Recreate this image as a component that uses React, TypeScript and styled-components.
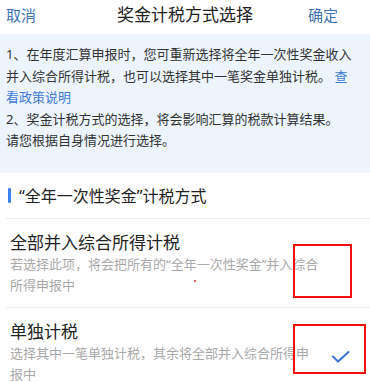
import React from "react";
import styled, { createGlobalStyle } from "styled-components";

const GlobalStyle = createGlobalStyle`
  html, body {
    margin: 0;
    padding: 0;
    background: #ffffff;
  }
  body {
    font-family: "Noto Sans", "Noto Sans CJK SC", sans-serif;
    -webkit-font-smoothing: antialiased;
  }
  * {
    box-sizing: border-box;
  }
`;

const Page = styled.div`
  width: 370px;
  height: 382px;
  overflow: hidden;
  background: #ffffff;
`;

const NavBar = styled.div`
  height: 34px;
  padding: 0 6px 4px 6px;
  display: flex;
  align-items: center;
  justify-content: space-between;
`;

const NavButton = styled.span`
  width: 60px;
  font-size: 15px;
  line-height: 22px;
  color: #3f72b2;
  text-align: ${props => (props.$align ? props.$align : "left")};
  padding-right: ${props => (props.$align === "right" ? "26px" : "0")};
`;

const NavTitle = styled.h1`
  margin: 0;
  font-size: 17px;
  line-height: 22px;
  font-weight: 400;
  color: #222222;
`;

const Notice = styled.div`
  height: 139px;
  background: #edf4fd;
  border-bottom: 2px solid #f3f4f6;
  padding: 10px 16px 0 6px;
  font-size: 13px;
  line-height: 21.5px;
  color: #333333;
`;

const NoticeLine = styled.p`
  margin: 0;
`;

const NoticeLink = styled.span`
  color: #3d7bd6;
`;

const SectionHeader = styled.div`
  height: 46px;
  margin-left: 6px;
  padding-left: 2px;
  display: flex;
  align-items: center;
  border-bottom: 1px solid #ececec;
`;

const SectionMark = styled.span`
  width: 3px;
  height: 15px;
  border-radius: 1px;
  background: #3f80f0;
  margin-right: 8px;
`;

const SectionTitle = styled.span`
  font-size: 16px;
  line-height: 22px;
  color: #222222;
`;

const Option = styled.div`
  position: relative;
  margin-left: 6px;
  padding: 13px 0 11px 4px;
  display: flex;
  align-items: flex-start;
  border-bottom: 1px solid #ececec;
`;

const OptionText = styled.div`
  width: ${props => props.$width}px;
`;

const OptionTitle = styled.div`
  font-size: 17px;
  line-height: 22px;
  color: #222222;
`;

const OptionDesc = styled.div`
  font-size: 13px;
  line-height: 21px;
  color: #a8a8a8;
`;

const CheckSlot = styled.div`
  padding: 26px 0 0 12px;
`;

const Mark = styled.div`
  position: absolute;
  left: ${props => props.$left}px;
  top: ${props => props.$top}px;
  width: ${props => props.$width}px;
  height: ${props => props.$height}px;
  border: 2px solid #f01010;
`;

const Dot = styled.span`
  position: absolute;
  left: 188px;
  top: 61px;
  width: 2px;
  height: 2px;
  border-radius: 1px;
  background: #e03030;
`;

const CheckIcon = () => (
  <svg width="18" height="13" viewBox="0 0 18 13">
    <polyline
      points="1,5.5 6,10.5 16.5,1"
      fill="none"
      stroke="#3a6fd3"
      strokeWidth="2"
      strokeLinecap="round"
      strokeLinejoin="round"
    />
  </svg>
);

const App = () => (
  <Page>
    <GlobalStyle />
    <NavBar>
      <NavButton>取消</NavButton>
      <NavTitle>奖金计税方式选择</NavTitle>
      <NavButton $align="right">确定</NavButton>
    </NavBar>
    <Notice>
      <NoticeLine>
        1、在年度汇算申报时，您可重新选择将全年一次性奖金收入并入综合所得计税，也可以选择其中一笔奖金单独计税。{" "}
        <NoticeLink>查看政策说明</NoticeLink>
      </NoticeLine>
      <NoticeLine>2、奖金计税方式的选择，将会影响汇算的税款计算结果。</NoticeLine>
      <NoticeLine>请您根据自身情况进行选择。</NoticeLine>
    </Notice>
    <SectionHeader>
      <SectionMark />
      <SectionTitle>“全年一次性奖金”计税方式</SectionTitle>
    </SectionHeader>
    <Option>
      <OptionText $width={314}>
        <OptionTitle>全部并入综合所得计税</OptionTitle>
        <OptionDesc>若选择此项，将会把所有的“全年一次性奖金”并入综合所得申报中</OptionDesc>
      </OptionText>
      <Mark $left={287} $top={25} $width={59} $height={54} />
      <Dot />
    </Option>
    <Option>
      <OptionText $width={310}>
        <OptionTitle>单独计税</OptionTitle>
        <OptionDesc>选择其中一笔单独计税，其余将全部并入综合所得申报中</OptionDesc>
      </OptionText>
      <CheckSlot>
        <CheckIcon />
      </CheckSlot>
      <Mark $left={287} $top={16} $width={73} $height={50} />
    </Option>
  </Page>
);

export default App;
